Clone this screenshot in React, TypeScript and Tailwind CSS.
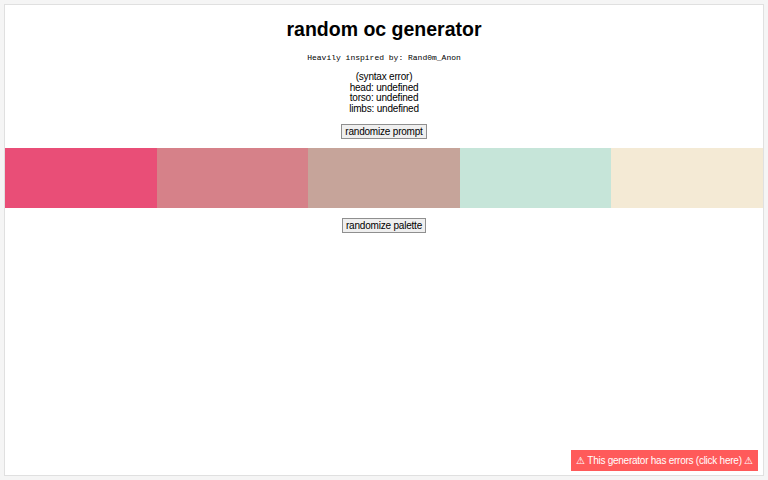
const PALETTE = ['#e94e77', '#d68189', '#c6a49a', '#c6e5d9', '#f4ead5'];

export default function App() {
  return (
    <div className="h-[480px] w-[768px] bg-[#f5f5f5] p-[4px] font-['Liberation_Sans',Arial,sans-serif] text-black">
      <div className="relative flex h-full flex-col items-center border border-[#e0e0e0] bg-white">
        <h1 className="mt-[12px] text-[19.5px] font-bold leading-[24px]">random oc generator</h1>

        <p className="mt-[12px] font-['Liberation_Mono',monospace] text-[8px] leading-[10px]">
          Heavily inspired by: Rand0m_Anon
        </p>

        <div className="mt-[9px] flex flex-col items-center text-[10px] leading-[10.7px] tracking-[-0.2px]">
          <span>(syntax error)</span>
          <span>head: undefined</span>
          <span>torso: undefined</span>
          <span>limbs: undefined</span>
        </div>

        <button className="mt-[9px] h-[15px] border border-[#8f8f8f] bg-[#efefef] px-[3px] text-[10px] leading-[13px] tracking-[-0.2px]">
          randomize prompt
        </button>

        <div className="mt-[9px] flex h-[60px] w-full">
          {PALETTE.map((c) => (
            <div key={c} className="flex-1" style={{ backgroundColor: c }} />
          ))}
        </div>

        <button className="mt-[10px] h-[15px] border border-[#8f8f8f] bg-[#efefef] px-[3px] text-[10px] leading-[13px] tracking-[-0.2px]">
          randomize palette
        </button>

        <div className="absolute bottom-[4px] right-[5px] flex h-[21px] items-center bg-[#ff5a5a] px-[5px] text-[10px] tracking-[-0.25px] text-white">
          ⚠ This generator has errors (click here) ⚠
        </div>
      </div>
    </div>
  );
}
